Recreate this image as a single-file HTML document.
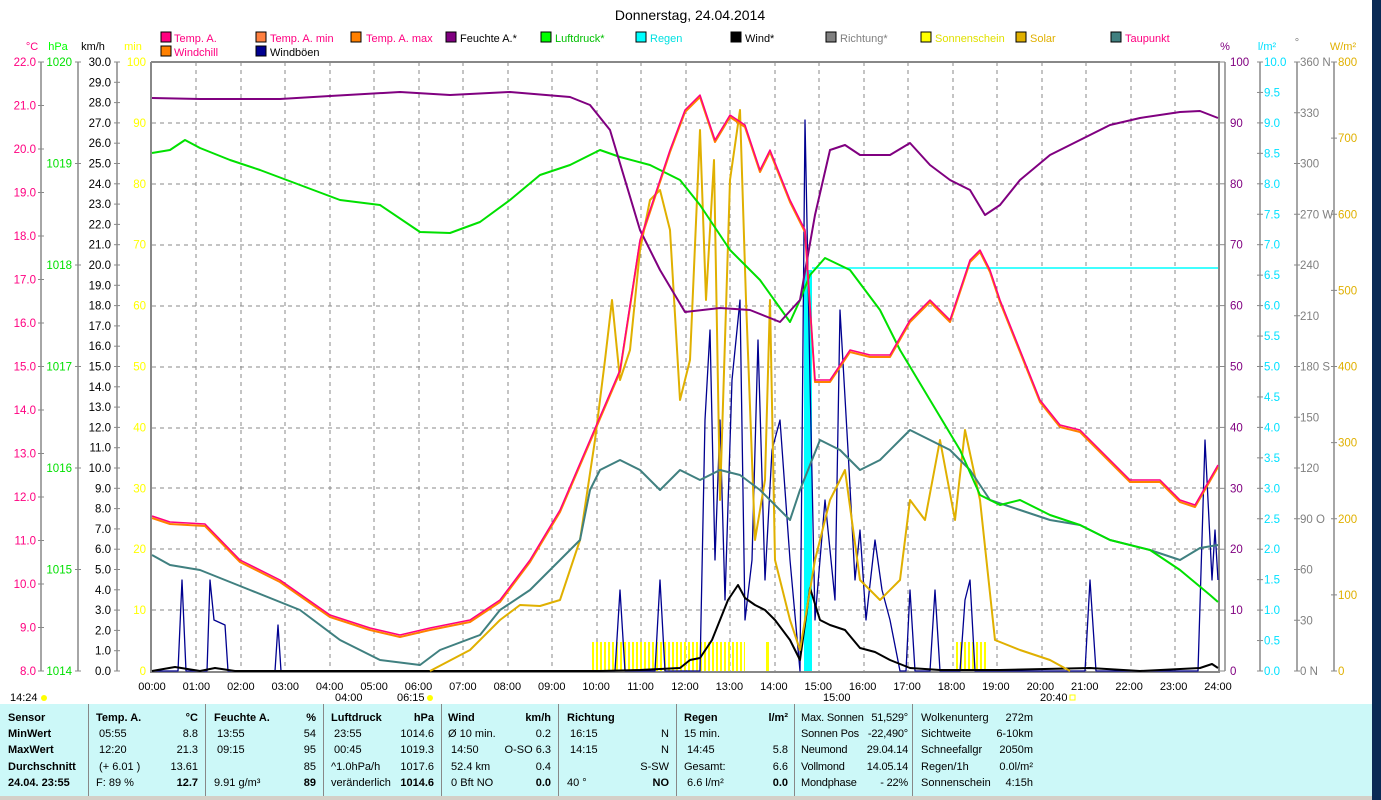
<!DOCTYPE html>
<html><head><meta charset="utf-8"><style>
body{margin:0;width:1381px;height:800px;background:#fff;overflow:hidden;position:relative;font-family:"Liberation Sans",sans-serif}
svg{position:absolute;left:0;top:0}
.p{position:absolute;left:0;top:704px;width:1372px;height:92px;background:#ccf8f8}
.c{position:absolute;top:0;height:92px;border-right:1px solid #888;font-size:11px;line-height:16.2px;padding-top:6px;box-sizing:border-box}
.c div{display:flex;justify-content:space-between;white-space:nowrap}
.b{font-weight:bold}
</style></head><body>
<svg width="1381" height="800" font-family="Liberation Sans, sans-serif" font-size="11.5">
<defs><pattern id="sun" width="4" height="10" patternUnits="userSpaceOnUse"><rect width="2" height="10" fill="#ffff00"/></pattern></defs>
<text x="690" y="20" text-anchor="middle" font-size="14" fill="#000">Donnerstag, 24.04.2014</text>
<g font-size="11">
<rect x="161" y="32" width="10" height="10" fill="#ff0080" stroke="#000"/><text x="174" y="42" fill="#ff0080">Temp. A.</text>
<rect x="256" y="32" width="10" height="10" fill="#ff8040" stroke="#000"/><text x="270" y="42" fill="#ff0080">Temp. A. min</text>
<rect x="351" y="32" width="10" height="10" fill="#ff8000" stroke="#000"/><text x="366" y="42" fill="#ff0080">Temp. A. max</text>
<rect x="446" y="32" width="10" height="10" fill="#800080" stroke="#000"/><text x="460" y="42" fill="#000">Feuchte A.*</text>
<rect x="541" y="32" width="10" height="10" fill="#00ff00" stroke="#000"/><text x="555" y="42" fill="#00c000">Luftdruck*</text>
<rect x="636" y="32" width="10" height="10" fill="#00ffff" stroke="#000"/><text x="650" y="42" fill="#00e0e0">Regen</text>
<rect x="731" y="32" width="10" height="10" fill="#000" stroke="#000"/><text x="745" y="42" fill="#000">Wind*</text>
<rect x="826" y="32" width="10" height="10" fill="#808080" stroke="#000"/><text x="840" y="42" fill="#808080">Richtung*</text>
<rect x="921" y="32" width="10" height="10" fill="#ffff00" stroke="#000"/><text x="935" y="42" fill="#e0e000">Sonnenschein</text>
<rect x="1016" y="32" width="10" height="10" fill="#e0b000" stroke="#000"/><text x="1030" y="42" fill="#e0b000">Solar</text>
<rect x="1111" y="32" width="10" height="10" fill="#408080" stroke="#000"/><text x="1125" y="42" fill="#ff0080">Taupunkt</text>
<rect x="161" y="46" width="10" height="10" fill="#ff8000" stroke="#000"/><text x="174" y="56" fill="#ff0080">Windchill</text>
<rect x="256" y="46" width="10" height="10" fill="#000090" stroke="#000"/><text x="270" y="56" fill="#000">Windböen</text>
</g>
<g font-size="11"><text x="32" y="50" text-anchor="middle" fill="#ff0080">°C</text><text x="58" y="50" text-anchor="middle" fill="#00ff00">hPa</text><text x="93" y="50" text-anchor="middle">km/h</text><text x="133" y="50" text-anchor="middle" fill="#ffff00">min</text>
<text x="1225" y="50" text-anchor="middle" fill="#800080">%</text><text x="1267" y="50" text-anchor="middle" fill="#00e0ff">l/m²</text><text x="1297" y="46" text-anchor="middle" fill="#808080">°</text><text x="1343" y="50" text-anchor="middle" fill="#e0b000">W/m²</text></g>
<g stroke="#888" stroke-dasharray="4,4" stroke-width="1">
<path d="M196,62V671M241,62V671M285,62V671M330,62V671M374,62V671M419,62V671M463,62V671M508,62V671M552,62V671M597,62V671M641,62V671M686,62V671M730,62V671M775,62V671M819,62V671M864,62V671M908,62V671M953,62V671M997,62V671M1042,62V671M1086,62V671M1131,62V671M1175,62V671"/>
<path d="M152,123H1218M152,184H1218M152,245H1218M152,306H1218M152,367H1218M152,428H1218M152,488H1218M152,549H1218M152,610H1218"/>
</g>
<g stroke="#888" stroke-width="2" fill="none"><path d="M151,62V672H1219V62H151"/></g>
<g stroke="#888" stroke-width="1.5"><path d="M41,62V671M78,62V671M117,62V671M1225,62V671M1260,62V671M1297,62V671M1334,62V671"/></g>
<g id="ax" font-size="11.5"></g>
<rect x="592" y="642" width="153" height="29" fill="url(#sun)"/><rect x="766" y="642" width="3" height="29" fill="#ffff00"/><rect x="955" y="642" width="33" height="29" fill="url(#sun)"/>
<g fill="none" stroke-linejoin="round">
<polyline stroke="#00ffff" stroke-width="1.5" points="812,268 1218,268"/>
<rect x="804" y="270" width="8" height="401" fill="#00ffff" stroke="none"/>
<polyline stroke="#000090" stroke-width="1.3" points="152,671 178,671 182,580 186,671 207,671 210,580 214,620 225,625 228,671 275,671 278,625 281,671 615,671 620,590 625,671 655,671 660,580 665,671 700,671 705,420 710,330 715,560 720,420 725,600 732,380 740,300 745,620 752,560 758,340 765,580 772,450 780,420 790,560 800,671 805,120 810,380 815,620 825,500 835,600 840,310 848,450 855,580 860,530 866,620 875,540 882,590 890,620 900,671 906,671 910,590 915,671 930,671 935,590 940,671 960,671 965,600 970,580 975,671 1085,671 1090,580 1096,671 1198,671 1205,440 1212,580 1215,530 1218,580"/>
<polyline stroke="#000" stroke-width="2" points="152,671 175,667 200,671 215,668 235,671 600,671 640,670 680,668 690,660 700,658 712,640 720,620 728,600 738,585 745,598 755,605 765,610 775,620 790,640 800,660 810,588 820,620 830,625 845,630 860,648 875,652 890,660 910,668 940,670 1000,670 1090,668 1140,671 1200,668 1212,664 1218,668"/>
<polyline stroke="#e0b000" stroke-width="2" points="430,671 470,650 500,620 520,605 540,606 560,600 580,540 595,440 605,360 612,300 620,380 630,350 640,250 650,200 660,190 670,230 680,400 690,360 700,130 706,300 714,160 720,500 730,180 740,110 746,300 755,540 765,480 770,300 775,560 790,620 800,650 815,560 830,500 845,470 860,580 880,600 900,580 910,500 925,520 940,440 955,520 965,430 980,500 995,640 1020,650 1050,660 1070,671"/>
<polyline stroke="#408080" stroke-width="2" points="152,555 170,565 200,570 250,590 300,610 340,640 380,660 420,665 440,650 480,635 500,610 530,590 560,560 580,540 590,490 600,470 620,460 640,470 660,490 680,470 700,480 720,470 740,475 760,490 790,520 800,490 820,440 840,450 860,470 880,460 900,440 910,430 930,440 950,450 970,470 990,500 1020,510 1050,520 1080,525 1110,540 1150,550 1180,560 1200,548 1218,545"/>
<polyline stroke="#00e000" stroke-width="2" points="152,153 170,150 185,140 200,148 230,160 260,170 300,185 340,200 380,205 420,232 450,233 480,222 510,200 540,175 570,165 600,150 620,157 650,165 680,180 700,205 730,250 760,280 790,322 800,300 810,275 825,258 850,270 880,310 900,350 930,400 960,450 980,495 1000,505 1020,500 1050,515 1080,525 1110,540 1150,550 1180,570 1210,595 1218,602"/>
<polyline stroke="#800080" stroke-width="2" points="152,98 200,99 240,99 280,99 330,96 400,92 450,95 510,92 570,97 590,105 610,130 625,180 640,230 660,270 685,312 720,308 750,310 780,322 800,300 815,215 830,150 845,145 860,155 890,155 910,143 930,165 950,180 970,190 985,215 1000,205 1020,180 1050,155 1080,140 1110,125 1140,118 1180,112 1200,111 1218,118"/>
<polyline stroke="#ff8000" stroke-width="2" points="152,518 170,524 205,526 240,562 280,582 330,617 370,630 400,637 430,630 470,622 500,602 530,562 560,512 590,442 620,372 640,242 655,197 670,152 685,112 700,97 715,142 730,117 745,127 760,172 770,152 790,202 805,232 815,382 830,382 850,352 870,357 890,357 910,322 930,302 950,322 960,292 970,262 980,252 990,272 1000,302 1020,352 1040,402 1060,427 1080,432 1100,452 1130,482 1160,482 1180,502 1195,507 1218,467"/>
<polyline stroke="#ff0080" stroke-width="1.5" points="152,516 170,522 205,524 240,560 280,580 330,615 370,628 400,635 430,628 470,620 500,600 530,560 560,510 590,440 620,370 640,240 655,195 670,150 685,110 700,95 715,140 730,115 745,125 760,170 770,150 790,200 805,230 815,380 830,380 850,350 870,355 890,355 910,320 930,300 950,320 960,290 970,260 980,250 990,270 1000,300 1020,350 1040,400 1060,425 1080,430 1100,450 1130,480 1160,480 1180,500 1195,505 1218,465"/>
</g>
<g font-size="11" text-anchor="middle" id="tl"></g>
<g font-size="11"><text x="10" y="701">14:24</text><circle cx="44" cy="698" r="3" fill="#ffff00"/><text x="335" y="701">04:00</text><text x="397" y="701">06:15</text><circle cx="430" cy="698" r="3" fill="#ffff00"/><text x="823" y="701">15:00</text><text x="1040" y="701">20:40</text><rect x="1070" y="695" width="5" height="5" fill="none" stroke="#ffff00"/></g>
<rect x="1372" y="0" width="9" height="800" fill="#0a2a55"/>
<rect x="0" y="796" width="1372" height="4" fill="#d4d0c8"/>
</svg>
<div class="p">
<div class="c" style="left:0;width:89px;padding-left:8px"><div class="b">Sensor</div><div class="b">MinWert</div><div class="b">MaxWert</div><div class="b">Durchschnitt</div><div class="b">24.04. 23:55</div></div>
<div class="c" style="left:89px;width:117px;padding:6px 7px 0 7px"><div class="b"><span>Temp. A.</span><span>°C</span></div><div><span>&nbsp;05:55</span><span>8.8</span></div><div><span>&nbsp;12:20</span><span>21.3</span></div><div><span>&nbsp;(+ 6.01 )</span><span>13.61</span></div><div><span>F: 89 %</span><span class="b">12.7</span></div></div>
<div class="c" style="left:206px;width:118px;padding:6px 7px 0 8px"><div class="b"><span>Feuchte A.</span><span>%</span></div><div><span>&nbsp;13:55</span><span>54</span></div><div><span>&nbsp;09:15</span><span>95</span></div><div><span></span><span>85</span></div><div><span>9.91 g/m³</span><span class="b">89</span></div></div>
<div class="c" style="left:324px;width:118px;padding:6px 7px 0 7px"><div class="b"><span>Luftdruck</span><span>hPa</span></div><div><span>&nbsp;23:55</span><span>1014.6</span></div><div><span>&nbsp;00:45</span><span>1019.3</span></div><div><span>^1.0hPa/h</span><span>1017.6</span></div><div><span>veränderlich</span><span class="b">1014.6</span></div></div>
<div class="c" style="left:442px;width:117px;padding:6px 7px 0 6px"><div class="b"><span>Wind</span><span>km/h</span></div><div><span>Ø 10 min.</span><span>0.2</span></div><div><span>&nbsp;14:50</span><span>O-SO 6.3</span></div><div><span>&nbsp;52.4 km</span><span>0.4</span></div><div><span>&nbsp;0 Bft NO</span><span class="b">0.0</span></div></div>
<div class="c" style="left:559px;width:118px;padding:6px 7px 0 8px"><div class="b"><span>Richtung</span><span></span></div><div><span>&nbsp;16:15</span><span>N</span></div><div><span>&nbsp;14:15</span><span>N</span></div><div><span></span><span>S-SW</span></div><div><span>40 °</span><span class="b">NO</span></div></div>
<div class="c" style="left:677px;width:118px;padding:6px 6px 0 7px"><div class="b"><span>Regen</span><span>l/m²</span></div><div><span>15 min.</span><span></span></div><div><span>&nbsp;14:45</span><span>5.8</span></div><div><span>Gesamt:</span><span>6.6</span></div><div><span>&nbsp;6.6 l/m²</span><span class="b">0.0</span></div></div>
<div class="c" style="left:795px;width:118px;padding:6px 4px 0 6px;letter-spacing:-0.2px"><div><span>Max. Sonnen</span><span>51,529°</span></div><div><span>Sonnen Pos</span><span>-22,490°</span></div><div><span>Neumond</span><span>29.04.14</span></div><div><span>Vollmond</span><span>14.05.14</span></div><div><span>Mondphase</span><span>- 22%</span></div></div>
<div class="c" style="left:913px;width:120px;border:none;padding:6px 0 0 8px"><div><span>Wolkenunterg</span><span>272m</span></div><div><span>Sichtweite</span><span>6-10km</span></div><div><span>Schneefallgr</span><span>2050m</span></div><div><span>Regen/1h</span><span>0.0l/m²</span></div><div><span>Sonnenschein</span><span>4:15h</span></div></div>
</div>
<script>
var ns="http://www.w3.org/2000/svg",ax=document.getElementById("ax");
function t(x,y,s,c,a){var e=document.createElementNS(ns,"text");e.setAttribute("x",x);e.setAttribute("y",y+4);e.setAttribute("fill",c);e.setAttribute("text-anchor",a||"end");e.textContent=s;ax.appendChild(e);}
function tick(x,y,w){var l=document.createElementNS(ns,"path");l.setAttribute("d","M"+x+","+y+"h"+w);l.setAttribute("stroke","#888");ax.appendChild(l);}
var T=62,B=671,H=B-T;
for(var i=0;i<=14;i++){var y=T+H*i/14;t(36,y,(22-i).toFixed(1),"#ff0080");tick(38,y,6);}
for(i=0;i<=6;i++){y=T+H*i/6;t(72,y,1020-i,"#00e000");tick(75,y,6);}
for(i=0;i<=30;i++){y=T+H*i/30;t(111,y,(30-i).toFixed(1),"#000");tick(114,y,6);}
for(i=0;i<=10;i++){y=T+H*i/10;t(146,y,100-10*i,"#ffff00");}
for(i=0;i<=10;i++){y=T+H*i/10;t(1230,y,100-10*i,"#800080","start");tick(1219,y,6);}
for(i=0;i<=20;i++){y=T+H*i/20;t(1264,y,(10-0.5*i).toFixed(1),"#00e0ff","start");tick(1257,y,6);}
var dl={0:" N",3:" W",6:" S",9:" O",12:" N"};
for(i=0;i<=12;i++){y=T+H*i/12;t(1300,y,(360-30*i)+(dl[i]||""),"#808080","start");tick(1294,y,6);}
for(i=0;i<=8;i++){y=T+H*i/8;t(1338,y,800-100*i,"#e0b000","start");tick(1331,y,6);}
var tl=document.getElementById("tl");
for(i=0;i<=24;i++){var e=document.createElementNS(ns,"text");e.setAttribute("x",152+1066*i/24);e.setAttribute("y",690);e.textContent=(i<10?"0":"")+i+":00";tl.appendChild(e);}
</script>
</body></html>
